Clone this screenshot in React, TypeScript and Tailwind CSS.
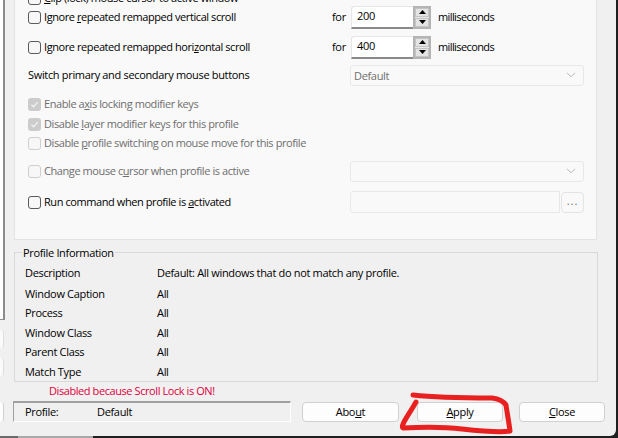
import type { ReactNode } from 'react'

const font = "font-['Open_Sans','Noto_Sans',sans-serif]"

function Check({ checked, disabled }: { checked?: boolean; disabled?: boolean }) {
  if (checked) {
    return (
      <span className="flex h-[13px] w-[13px] shrink-0 items-center justify-center rounded-[3px] bg-[#cccccc]">
        <svg width="9" height="9" viewBox="0 0 9 9" fill="none">
          <path d="M1.5 4.8 3.6 6.8 7.6 2.2" stroke="#f4f4f4" strokeWidth="1.2" />
        </svg>
      </span>
    )
  }
  return (
    <span
      className={`h-[13px] w-[13px] shrink-0 rounded-[3px] border bg-[#f7f7f7] ${
        disabled ? 'border-[#cfcfcf]' : 'border-[#5a5a5a]'
      }`}
    />
  )
}

function Label({ children, disabled }: { children: ReactNode; disabled?: boolean }) {
  return (
    <span
      className={`whitespace-nowrap pl-[3px] tracking-[-0.42px] ${disabled ? 'text-[#6e6e6e]' : 'text-black'}`}
    >
      {children}
    </span>
  )
}

function Spin({ value }: { value: string }) {
  return (
    <div className="flex h-[23px] w-[80px] shrink-0">
      <div className="h-full w-[62px] rounded-tl-[3px] border-b-2 border-l border-t border-b-[#8a8a8a] border-l-[#e6e6e6] border-t-[#e6e6e6] bg-white pl-[5px] leading-[18px] text-black">
        {value}
      </div>
      <div className="flex w-[18px] flex-col gap-px border-2 border-[#b4b4b4] bg-[#e8e8e8]">
        <span className="flex flex-1 items-center justify-center border border-[#c4c4c4] bg-[#e4e4e4]">
          <svg width="7" height="4" viewBox="0 0 7 4">
            <path d="M3.5 0 7 4H0z" fill="#000" />
          </svg>
        </span>
        <span className="flex flex-1 items-center justify-center border border-[#c4c4c4] bg-[#e4e4e4]">
          <svg width="7" height="4" viewBox="0 0 7 4">
            <path d="M0 0h7L3.500 4z" fill="#000" />
          </svg>
        </span>
      </div>
    </div>
  )
}

function Combo({ value }: { value?: string }) {
  return (
    <div className="flex h-[21px] w-[234px] shrink-0 items-center justify-between rounded-[3px] border border-[#e8e8e8] bg-[#f9f9f9] pl-[3px] pr-[7px] text-[#6e6e6e]">
      <span className="pt-px">{value}</span>
      <svg width="10" height="6" viewBox="0 0 10 6" fill="none">
        <path d="M1 .8 5 4.800 9 .8" stroke="#b5b5b5" strokeWidth="1" />
      </svg>
    </div>
  )
}

function InfoRow({ label, value, className }: { label: string; value: string; className: string }) {
  return (
    <div className={`flex h-[20px] items-center ${className}`}>
      <span className="w-[132px] shrink-0">{label}</span>
      <span className="whitespace-nowrap">{value}</span>
    </div>
  )
}

function Btn({ children, className }: { children: ReactNode; className: string }) {
  return (
    <div
      className={`flex h-[20px] items-center justify-center rounded-[4px] border border-[#d0d0d0] bg-[#fdfdfd] text-black ${className}`}
    >
      {children}
    </div>
  )
}

export default function App() {
  return (
    <div
      className={`relative h-[438px] w-[618px] overflow-hidden bg-[#1f1f1f] text-[11px] leading-[16px] tracking-[-0.33px] ${font}`}
    >
      <div className="flex h-[436px] w-[616px] flex-col overflow-hidden rounded-br-[6px] bg-[#f0f0f0]">
        <div className="flex h-[382px] shrink-0">
          {/* left side, cut off by the crop */}
          <div className="flex w-[14px] shrink-0 flex-col">
            <div className="h-[320px] w-[5px] border-b border-r-2 border-[#8c8c8c] bg-white" />
            <div className="mt-[10px] h-[18px] w-[4px] rounded-r-[3px] border-r border-[#dddddd] bg-[#fafafa]" />
            <div className="mt-[10px] h-[18px] w-[4px] rounded-r-[3px] border-r border-[#dddddd] bg-[#fafafa]" />
          </div>

          <div className="flex w-[584px] shrink-0 flex-col">
            {/* settings tab */}
            <div className="h-[240px] w-[583px] shrink-0 overflow-hidden border-b border-r border-l border-[#e3e3e3] bg-[#f9f9f9]">
              <div className="-mt-[12px] flex h-[20px] items-center pl-[13px]">
                <Check />
                <Label>
                  <u>C</u>lip (lock) mouse cursor to active window
                </Label>
              </div>
              <div className="-mt-px flex h-[20px] items-center pl-[13px]">
                <div className="flex w-[304px] items-center">
                  <Check />
                  <Label>
                    Ignore <u>r</u>epeated remapped vertical scroll
                  </Label>
                </div>
                <span className="w-[19px]">for</span>
                <Spin value="200" />
                <span className="pl-[7px] tracking-[-0.6px]">milliseconds</span>
              </div>
              <div className="mt-[10px] flex h-[20px] items-center pl-[13px]">
                <div className="flex w-[304px] items-center">
                  <Check />
                  <Label>
                    Ignore repeated remapped hori<u>z</u>ontal scroll
                  </Label>
                </div>
                <span className="w-[19px]">for</span>
                <Spin value="400" />
                <span className="pl-[7px] tracking-[-0.6px]">milliseconds</span>
              </div>
              <div className="mt-[8px] flex h-[20px] items-center pl-[13px]">
                <span className="w-[322px]">Switch primary and secondary mouse buttons</span>
                <Combo value="Default" />
              </div>
              <div className="mt-[9px] flex h-[20px] items-center pl-[13px]">
                <Check checked />
                <Label disabled>
                  Enable a<u>x</u>is locking modifier keys
                </Label>
              </div>
              <div className="flex h-[20px] items-center pl-[13px]">
                <Check checked />
                <Label disabled>
                  Disable <u>l</u>ayer modifier keys for this profile
                </Label>
              </div>
              <div className="-mt-px flex h-[20px] items-center pl-[13px]">
                <Check disabled />
                <Label disabled>
                  Disable <u>p</u>rofile switching on mouse move for this profile
                </Label>
              </div>
              <div className="mt-[8px] flex h-[20px] items-center pl-[13px]">
                <div className="flex w-[322px] items-center">
                  <Check disabled />
                  <Label disabled>
                    Change mouse c<u>u</u>rsor when profile is active
                  </Label>
                </div>
                <Combo />
              </div>
              <div className="mt-[11px] flex h-[20px] items-center pl-[13px]">
                <div className="flex w-[322px] items-center">
                  <Check />
                  <Label>
                    Run command when profile is <u>a</u>ctivated
                  </Label>
                </div>
                <div className="h-[22px] w-[210px] shrink-0 rounded-l-[3px] border border-[#e8e8e8] bg-[#f9f9f9]" />
                <div className="ml-px flex h-[21px] w-[23px] shrink-0 items-center justify-center rounded-[4px] border border-[#e4e4e4] bg-[#f9f9f9] pb-[2px] tracking-[1px] text-[#6e6e6e]">
                  ...
                </div>
              </div>
            </div>

            {/* profile info */}
            <div className="relative mt-[12px] h-[130px] w-[584px] border border-[#d9d9d9] pl-[10px] pt-[10px]">
              <span className="absolute -top-[8px] left-[7px] bg-[#f0f0f0] px-px text-black">Profile Information</span>
              <InfoRow label="Description" value="Default: All windows that do not match any profile." className="" />
              <InfoRow label="Window Caption" value="All" className="mt-px" />
              <InfoRow label="Process" value="All" className="-mt-px" />
              <InfoRow label="Window Class" value="All" className="" />
              <InfoRow label="Parent Class" value="All" className="-mt-px" />
              <InfoRow label="Match Type" value="All" className="" />
            </div>
          </div>
        </div>

        <div className="h-[19px] shrink-0 pl-[49px] pt-px tracking-[-0.42px] text-[#e0003c]">
          Disabled because Scroll Lock is ON!
        </div>

        <div className="flex h-[21px] shrink-0 items-center">
          <div className="h-[20px] w-[4px] rounded-r-[3px] border-r border-[#d0d0d0] bg-[#fdfdfd]" />
          <div className="ml-[9px] flex h-[21px] w-[278px] items-center border-b border-l border-r border-t-2 border-b-white border-l-[#a0a0a0] border-r-white border-t-[#a0a0a0] pl-[11px]">
            <span className="w-[72px]">Profile:</span>
            <span>Default</span>
          </div>
          <Btn className="ml-[11px] w-[97px]">
            Abo<u>u</u>t
          </Btn>
          <Btn className="ml-[18px] w-[86px]">
            <u>A</u>pply
          </Btn>
          <Btn className="ml-[16px] w-[86px]">
            <u>C</u>lose
          </Btn>
        </div>
      </div>

      {/* what shows of the desktop under the window */}
      <div className="absolute bottom-0 left-0 flex h-[2px] w-[93px]">
        <div className="w-[18px] bg-[#6a6a6a]" />
        <div className="w-[75px] bg-[#a8a8a8]" />
      </div>

      {/* red marker scribble around Apply */}
      <svg className="pointer-events-none absolute left-0 top-0" width="618" height="438" fill="none">
        <path
          d="M413 395C430 397 470 398 492 398C500 399 504 402 506 405C507 412 509 423 510 431C500 433 480 431 462 429C445 427 425 427 403 428C400 426 408 416 416 402"
          stroke="#e8201f"
          strokeWidth="5"
          strokeLinecap="round"
          strokeLinejoin="round"
        />
      </svg>
    </div>
  )
}
